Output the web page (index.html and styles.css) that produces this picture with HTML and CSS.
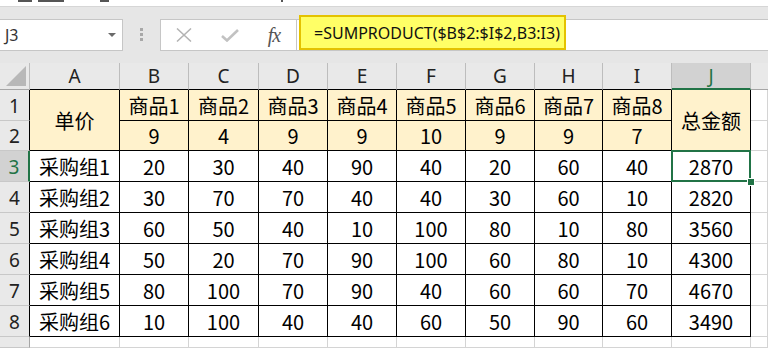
FILE: index.html
```html
<!DOCTYPE html>
<html lang="zh-CN">
<head>
  <meta charset="UTF-8" />
  <title>SUMPRODUCT 采购汇总</title>
  <link rel="stylesheet" href="styles.css">
</head>
<body>
  <div class="ribbon-tail">
    <i class="m1"></i><i class="m2"></i><i class="m3"></i><i class="m4"></i>
  </div>

  <div class="formula-bar">
    <div class="name-box">
      <span>J3</span>
      <svg width="8" height="4" viewBox="0 0 8 4"><path d="M0 0h8L4 4z" fill="#6a6a6a"/></svg>
    </div>
    <div class="grip"><i></i><i></i><i></i></div>
    <div class="fx-buttons">
      <span class="slot">
        <svg width="16" height="14" viewBox="0 0 16 14"><path d="M1 0.5L15 13.5M15 0.5L1 13.5" stroke="#b3b3b3" stroke-width="1.5" fill="none"/></svg>
      </span>
      <span class="slot">
        <svg width="18" height="13" viewBox="0 0 18 13"><path d="M1 7L6 11.5L17 1" stroke="#c2c2c2" stroke-width="2.6" fill="none"/></svg>
      </span>
      <span class="slot fx">fx</span>
    </div>
    <div class="formula-input">
      <div class="formula-highlight">=SUMPRODUCT($B$2:$I$2,B3:I3)</div>
    </div>
  </div>

  <div class="sheet">
    <!-- column headers -->
    <div class="hd corner"><svg width="20" height="20" viewBox="0 0 20 20"><path d="M20 0V20H0z" fill="#b8b8b8"/></svg></div>
    <div class="hd col">A</div>
    <div class="hd col">B</div>
    <div class="hd col">C</div>
    <div class="hd col">D</div>
    <div class="hd col">E</div>
    <div class="hd col">F</div>
    <div class="hd col">G</div>
    <div class="hd col">H</div>
    <div class="hd col">I</div>
    <div class="hd col active">J</div>
    <div class="hd col blank"></div>

    <!-- row 1 -->
    <div class="hd row">1</div>
    <div class="c head merged">单价</div>
    <div class="c head">商品1</div>
    <div class="c head">商品2</div>
    <div class="c head">商品3</div>
    <div class="c head">商品4</div>
    <div class="c head">商品5</div>
    <div class="c head">商品6</div>
    <div class="c head">商品7</div>
    <div class="c head">商品8</div>
    <div class="c head merged last">总金额</div>
    <div class="g"></div>

    <!-- row 2 -->
    <div class="hd row">2</div>
    <div class="c head">9</div>
    <div class="c head">4</div>
    <div class="c head">9</div>
    <div class="c head">9</div>
    <div class="c head">10</div>
    <div class="c head">9</div>
    <div class="c head">9</div>
    <div class="c head">7</div>
    <div class="g"></div>

    <div class="hd row active">3</div>
    <div class="c">采购组1</div><div class="c">20</div><div class="c">30</div><div class="c">40</div><div class="c">90</div><div class="c">40</div><div class="c">20</div><div class="c">60</div><div class="c">40</div>
    <div class="c selected">2870<span class="handle"></span></div>
    <div class="g"></div>

    <div class="hd row">4</div>
    <div class="c">采购组2</div><div class="c">30</div><div class="c">70</div><div class="c">70</div><div class="c">40</div><div class="c">40</div><div class="c">30</div><div class="c">60</div><div class="c">10</div><div class="c">2820</div>
    <div class="g"></div>

    <div class="hd row">5</div>
    <div class="c">采购组3</div><div class="c">60</div><div class="c">50</div><div class="c">40</div><div class="c">10</div><div class="c">100</div><div class="c">80</div><div class="c">10</div><div class="c">80</div><div class="c">3560</div>
    <div class="g"></div>

    <div class="hd row">6</div>
    <div class="c">采购组4</div><div class="c">50</div><div class="c">20</div><div class="c">70</div><div class="c">90</div><div class="c">100</div><div class="c">60</div><div class="c">80</div><div class="c">10</div><div class="c">4300</div>
    <div class="g"></div>

    <div class="hd row">7</div>
    <div class="c">采购组5</div><div class="c">80</div><div class="c">100</div><div class="c">70</div><div class="c">90</div><div class="c">40</div><div class="c">60</div><div class="c">60</div><div class="c">70</div><div class="c">4670</div>
    <div class="g"></div>

    <div class="hd row">8</div>
    <div class="c">采购组6</div><div class="c">10</div><div class="c">100</div><div class="c">40</div><div class="c">40</div><div class="c">60</div><div class="c">50</div><div class="c">90</div><div class="c">60</div><div class="c">3490</div>
    <div class="g"></div>

    <div class="hd row last-row"></div>
    <div class="g"></div><div class="g"></div><div class="g"></div><div class="g"></div><div class="g"></div><div class="g"></div>
    <div class="g"></div><div class="g"></div><div class="g"></div><div class="g"></div><div class="g"></div>
  </div>
</body>
</html>
```

FILE: styles.css
```css
html, body {
  margin: 0;
  padding: 0;
  width: 768px;
  height: 348px;
  overflow: hidden;
  background: #fff;
  font-family: "Noto Sans", "Open Sans", sans-serif;
}
.ribbon-tail {
  height: 6px;
  position: relative;
  background: #fff;
  border-bottom: 1px solid #d6d6d6;
}
.ribbon-tail i {
  position: absolute;
  top: 0;
  height: 2px;
  background: #555;
}
.ribbon-tail .m1 { left: 18px; width: 14px; }
.ribbon-tail .m2 { left: 38px; width: 26px; }
.ribbon-tail .m3 { left: 100px; width: 9px; }
.ribbon-tail .m4 { left: 281px; width: 2px; }

/* formula bar */
.formula-bar {
  height: 56px;
  box-sizing: border-box;
  padding-top: 12px;
  background: #e6e6e6;
  display: flex;
  align-items: flex-start;
}
.name-box {
  width: 124px;
  height: 32px;
  margin-left: -1px;
  box-sizing: border-box;
  border: 1px solid #c6c6c6;
  background: #fff;
  display: flex;
  align-items: center;
  justify-content: space-between;
  padding: 0 6px 0 5px;
  font-size: 16px;
  color: #333;
}
.grip {
  margin: 9px 0 0 17px;
  display: flex;
  flex-direction: column;
  gap: 2px;
}
.grip i {
  width: 3px;
  height: 3px;
  background: #a8a8a8;
}
.fx-buttons {
  margin-left: 17px;
  width: 137px;
  height: 32px;
  box-sizing: border-box;
  border: 1px solid #c6c6c6;
  background: #fff;
  display: flex;
  align-items: center;
}
.slot {
  width: 46px;
  display: flex;
  justify-content: center;
}
.slot.fx {
  width: 42px;
  font-family: "Liberation Serif", "DejaVu Serif", serif;
  font-style: italic;
  font-size: 20px;
  color: #555;
  letter-spacing: -1px;
}
.formula-input {
  flex: 1;
  height: 32px;
  box-sizing: border-box;
  border-top: 1px solid #c6c6c6;
  border-bottom: 1px solid #c6c6c6;
  background: #fff;
  position: relative;
}
.formula-highlight {
  position: absolute;
  left: 2px;
  top: -5px;
  width: 267px;
  height: 35px;
  box-sizing: border-box;
  background: #ffff66;
  border: 2px solid #e4c200;
  padding-left: 13px;
  display: flex;
  align-items: center;
  font-size: 16px;
  color: #111;
}

/* sheet grid */
.sheet {
  display: grid;
  grid-template-columns: 30px 90px 69px 70px 69px 69px 69px 69px 68px 69px 79px 1fr;
  grid-template-rows: 27px 31px 30px 31px 31px 31px 31px 31px 31px 11px;
}
.sheet > div {
  box-sizing: border-box;
  border-right: 1px solid #d4d4d4;
  border-bottom: 1px solid #d4d4d4;
  display: flex;
  align-items: center;
  justify-content: center;
}
.hd {
  background: #e9e9e9;
  color: #222;
  font-size: 19px;
}
.sheet > .hd.col {
  border-right-color: #bdbdbd;
  border-bottom-color: #000;
}
.sheet > .hd.col.blank {
  border-bottom-color: #a6a6a6;
  border-right: none;
}
.sheet > .hd.corner {
  border-right-color: #bdbdbd;
  border-bottom-color: #a6a6a6;
  justify-content: flex-end;
  align-items: flex-end;
  padding: 0 3px 3px 0;
}
.sheet > .hd.col.active {
  background: #d2d2d2;
  color: #217346;
  border-bottom: 2px solid #217346;
}
.sheet > .hd.row {
  border-right-color: #000;
  border-bottom-color: #c8c8c8;
  padding-top: 1px;
}
.sheet > .hd.row.active {
  background: #d2d2d2;
  color: #217346;
  border-right: 2px solid #217346;
}
.sheet > .hd.row.last-row {
  border-right-color: #a6a6a6;
}
.sheet > .c {
  border-color: #000;
  font-family: "Noto Sans CJK SC", "Noto Sans", sans-serif;
  font-size: 20px;
  color: #000;
}
.sheet > .c.head {
  background: #fff2cc;
}
.sheet > .c.merged {
  grid-row: span 2;
}
.sheet > .c.selected {
  position: relative;
}
.selected::after {
  content: "";
  position: absolute;
  inset: -1px;
  border: 2px solid #217346;
}
.handle {
  position: absolute;
  right: -5px;
  bottom: -5px;
  width: 6px;
  height: 6px;
  background: #217346;
  border: 1px solid #fff;
  z-index: 1;
}
```
